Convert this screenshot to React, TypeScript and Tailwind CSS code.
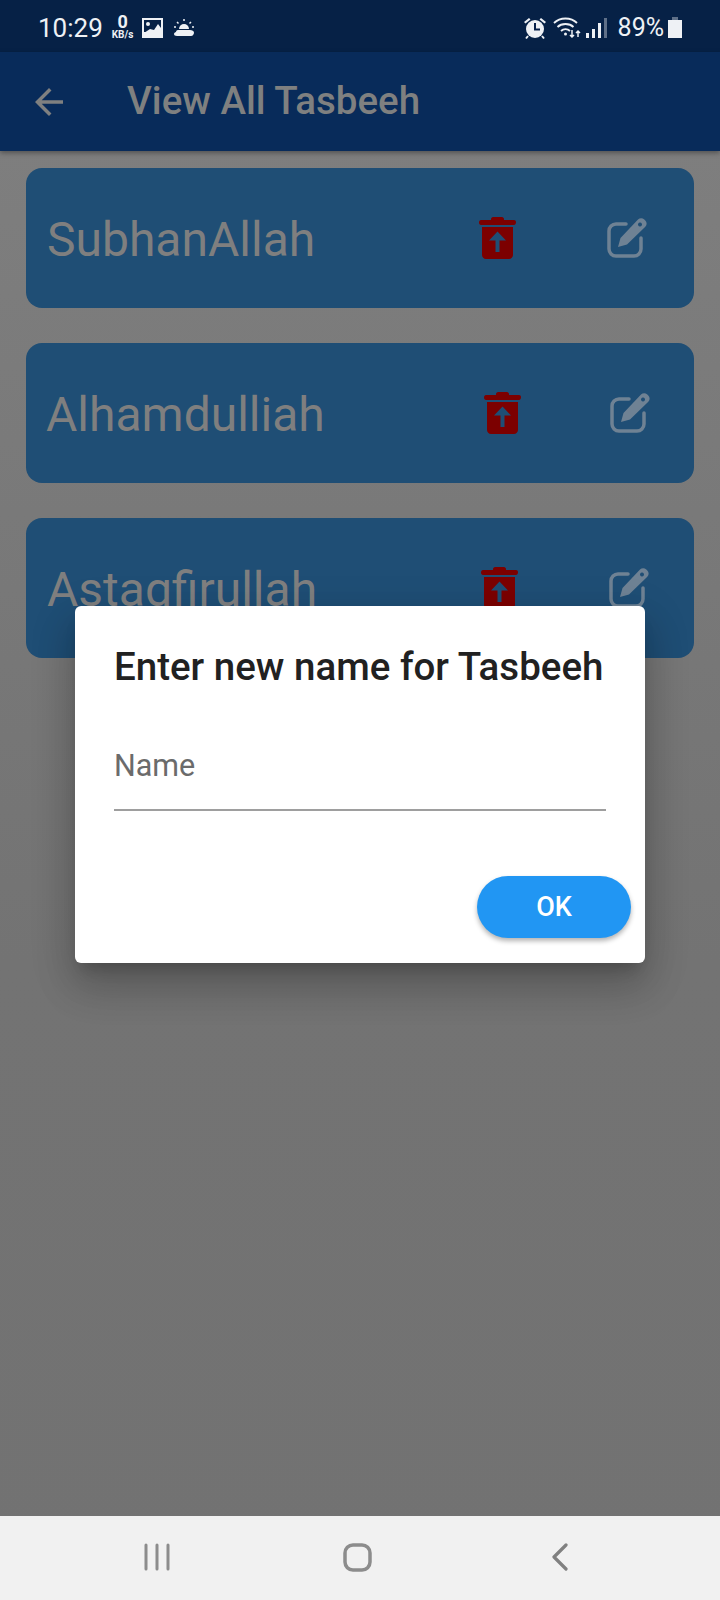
import React from "react";
import { MdArrowBack } from "react-icons/md";

const tasbeehs = [
  { name: "SubhanAllah", textPl: "pl-[21px]", trashMr: "mr-[91px]", editMr: "mr-[46px]" },
  { name: "Alhamdulliah", textPl: "pl-[20px]", trashMr: "mr-[89px]", editMr: "mr-[43px]" },
  { name: "Astagfirullah", textPl: "pl-[21px]", trashMr: "mr-[91px]", editMr: "mr-[44px]" },
];

function TrashUp({ className }: { className: string }) {
  return (
    <svg width="37" height="42" viewBox="0 0 37 42" fill="#7c0000" className={className}>
      <path d="M12 2c0-1 1-2 2-2h9c1 0 2 1 2 2v1h10c1.200 0 2 .8 2 2.200S36.200 8 35 8H2C.8 8 0 7 0 5.500S.8 3 2 3h10V2z" />
      <path
        fillRule="evenodd"
        d="M3 10h31v28c0 2.200-1.800 4-4 4H7c-2.200 0-4-1.800-4-4V10zm15.500 4.500L10 23.500h6.500V35h4V23.500H27l-8.500-9z"
      />
    </svg>
  );
}

function EditIcon({ className }: { className: string }) {
  return (
    <svg width="41" height="42" viewBox="0 0 41 42" fill="none" className={className}>
      <path
        d="M19 7H9a7 7 0 0 0-7 7v18a7 7 0 0 0 7 7h18a7 7 0 0 0 7-7V21"
        stroke="#6f8294"
        strokeWidth="3.500"
        strokeLinecap="round"
      />
      <path
        fillRule="evenodd"
        fill="#6f8294"
        d="M11 30l2.500-9L31 2.500c1.800-1.800 4.500-1.800 6.300 0l1 1c1.800 1.800 1.800 4.500 0 6.300L20 27.500zM33 5.500a2 2 0 1 0 .01 0z"
      />
    </svg>
  );
}

function StatusIcons() {
  return (
    <div className="flex items-center">
      {/* alarm */}
      <svg width="24" height="24" viewBox="0 0 24 24" fill="#eef1f5" className="mr-[6px]">
        <circle cx="12" cy="13" r="9" />
        <path d="M1 6l5-4 1.500 1.500-5 4zM23 6l-5-4-1.500 1.500 5 4z" />
        <path d="M5 20l-2 2.500M19 20l2 2.500" stroke="#eef1f5" strokeWidth="2" />
        <path d="M12 7v6.500h5" fill="none" stroke="#06204a" strokeWidth="2" />
      </svg>
      {/* wifi */}
      <svg width="28" height="24" viewBox="0 0 28 24" fill="none" stroke="#eef1f5" strokeWidth="1.800" className="mr-[5px]">
        <path d="M1 7c6-6 17-6 23 0" />
        <path d="M4.500 11c4-4 12-4 16 0" />
        <path d="M8 15c2.500-2.500 6.500-2.500 9 0" />
        <circle cx="12.500" cy="18" r="1.500" fill="#eef1f5" stroke="none" />
        <path d="M19 14v7M17 19l2 2 2-2M25 21v-6M23 17l2-2 2 2" strokeWidth="1.500" />
      </svg>
      {/* signal */}
      <div className="flex items-end gap-[3px] h-[20px] mr-[11px]">
        <div className="w-[3px] h-[5px] bg-[#eef1f5]" />
        <div className="w-[3px] h-[9px] bg-[#eef1f5]" />
        <div className="w-[3px] h-[15px] bg-[#eef1f5]" />
        <div className="w-[3px] h-[20px] bg-[#5f7088]" />
      </div>
      <span className="text-[25px] leading-none text-[#eef1f5]">89%</span>
      <div className="ml-[4px] flex flex-col items-center">
        <div className="w-[6px] h-[3px] bg-[#5f7088]" />
        <div className="w-[14px] h-[18px] bg-[#eef1f5]" />
      </div>
    </div>
  );
}

export default function App() {
  return (
    <div className="relative w-[720px] h-[1600px] flex flex-col overflow-hidden bg-gradient-to-b from-[#808080] via-[#737373] via-60% to-[#727272] font-['Roboto',sans-serif]">
      {/* Status bar */}
      <div className="h-[52px] shrink-0 bg-[#062146] flex items-center justify-between pl-[38px] pr-[38px] pt-[3px]">
        <div className="flex items-center">
          <span className="text-[26px] leading-none text-[#eef1f5]">10:29</span>
          <div className="ml-[9px] flex flex-col items-center text-[#eef1f5] font-bold">
            <span className="text-[18px] leading-[14px]">0</span>
            <span className="text-[10px] leading-[11px]">KB/s</span>
          </div>
          <svg width="21" height="20" viewBox="0 0 21 20" className="ml-[9px]">
            <rect x="0" y="0" width="21" height="20" fill="#eef1f5" />
            <rect x="2" y="2" width="17" height="12" fill="#062146" />
            <circle cx="6" cy="6" r="2" fill="#eef1f5" />
            <path d="M2 15l6-4 4 1 4-6 3 4v6H2z" fill="#eef1f5" />
          </svg>
          <svg width="22" height="20" viewBox="0 0 22 20" fill="#eef1f5" className="ml-[10px]">
            <path d="M6 11a5 5 0 0 1 10 0z" />
            <path d="M3 14c0-1.500 1-2 3-2h11c2 0 4 1 4 2.500S20 18 18 18H4c-2 0-3-1-3-2s1-2 2-2z" />
            <path d="M11 1v2M4 4l1.500 1.500M18 4l-1.500 1.500M1 9h2M19 9h2" stroke="#eef1f5" strokeWidth="1.500" />
          </svg>
        </div>
        <StatusIcons />
      </div>

      {/* Page behind the dialog */}
      <div className="flex-1 flex flex-col">
        <div className="h-[99px] shrink-0 bg-[#082b5a] shadow-[0_2px_5px_rgba(0,0,0,0.35)] flex items-center pl-[28px] text-[#7f8080]">
          <MdArrowBack size={42} />
          <h1 className="ml-[57px] text-[38.5px] font-medium leading-none">View All Tasbeeh</h1>
        </div>
        <div className="flex flex-col gap-[35px] px-[26px] pt-[17px]">
          {tasbeehs.map((t) => (
            <div
              key={t.name}
              className={`h-[140px] rounded-[16px] bg-[#1f4e75] flex items-center ${t.textPl}`}
            >
              <span className="text-[48px] leading-none text-[#7f7f7f] flex-1 pt-[3px]">{t.name}</span>
              <TrashUp className={t.trashMr} />
              <EditIcon className={t.editMr} />
            </div>
          ))}
        </div>
      </div>

      {/* Dialog */}
      <div className="absolute left-[75px] top-[606px] w-[570px] h-[357px] rounded-[6px] bg-white shadow-[0_24px_38px_3px_rgba(0,0,0,0.14),0_14px_46px_4px_rgba(0,0,0,0.12),0_11px_15px_-7px_rgba(0,0,0,0.2)] pl-[39px] pr-[39px] pt-[37px]">
        <h2 className="text-[38.5px] font-medium leading-[48px] text-[#212121] whitespace-nowrap">Enter new name for Tasbeeh</h2>
        <div className="mt-[56px] h-[64px] border-b-2 border-[#9e9e9e] text-[30.5px] leading-[38px] text-[#6b6b6b]">
          Name
        </div>
        <button className="absolute right-[14px] bottom-[25px] w-[154px] h-[62px] rounded-full bg-[#2196f3] text-white text-[27px] font-medium shadow-[0_3px_5px_rgba(0,0,0,0.3)]">
          OK
        </button>
      </div>

      {/* Navigation bar */}
      <div className="h-[84px] shrink-0 bg-[#f1f1f1] flex items-start pt-[27px] pl-[143px]">
        <svg width="28" height="28" viewBox="0 0 28 28" fill="none" stroke="#8c8c8c" strokeWidth="3" strokeLinecap="round">
          <path d="M3 2v24M14 2v24M25 2v24" />
        </svg>
        <svg width="30" height="30" viewBox="0 0 30 30" fill="none" stroke="#8c8c8c" strokeWidth="3.500" className="ml-[172px]">
          <rect x="2" y="2" width="25" height="25" rx="8" />
        </svg>
        <svg width="16" height="28" viewBox="0 0 16 28" fill="none" stroke="#808080" strokeWidth="3.200" strokeLinecap="round" strokeLinejoin="round" className="ml-[179px]">
          <path d="M14 2L2 14l12 12" />
        </svg>
      </div>
    </div>
  );
}
